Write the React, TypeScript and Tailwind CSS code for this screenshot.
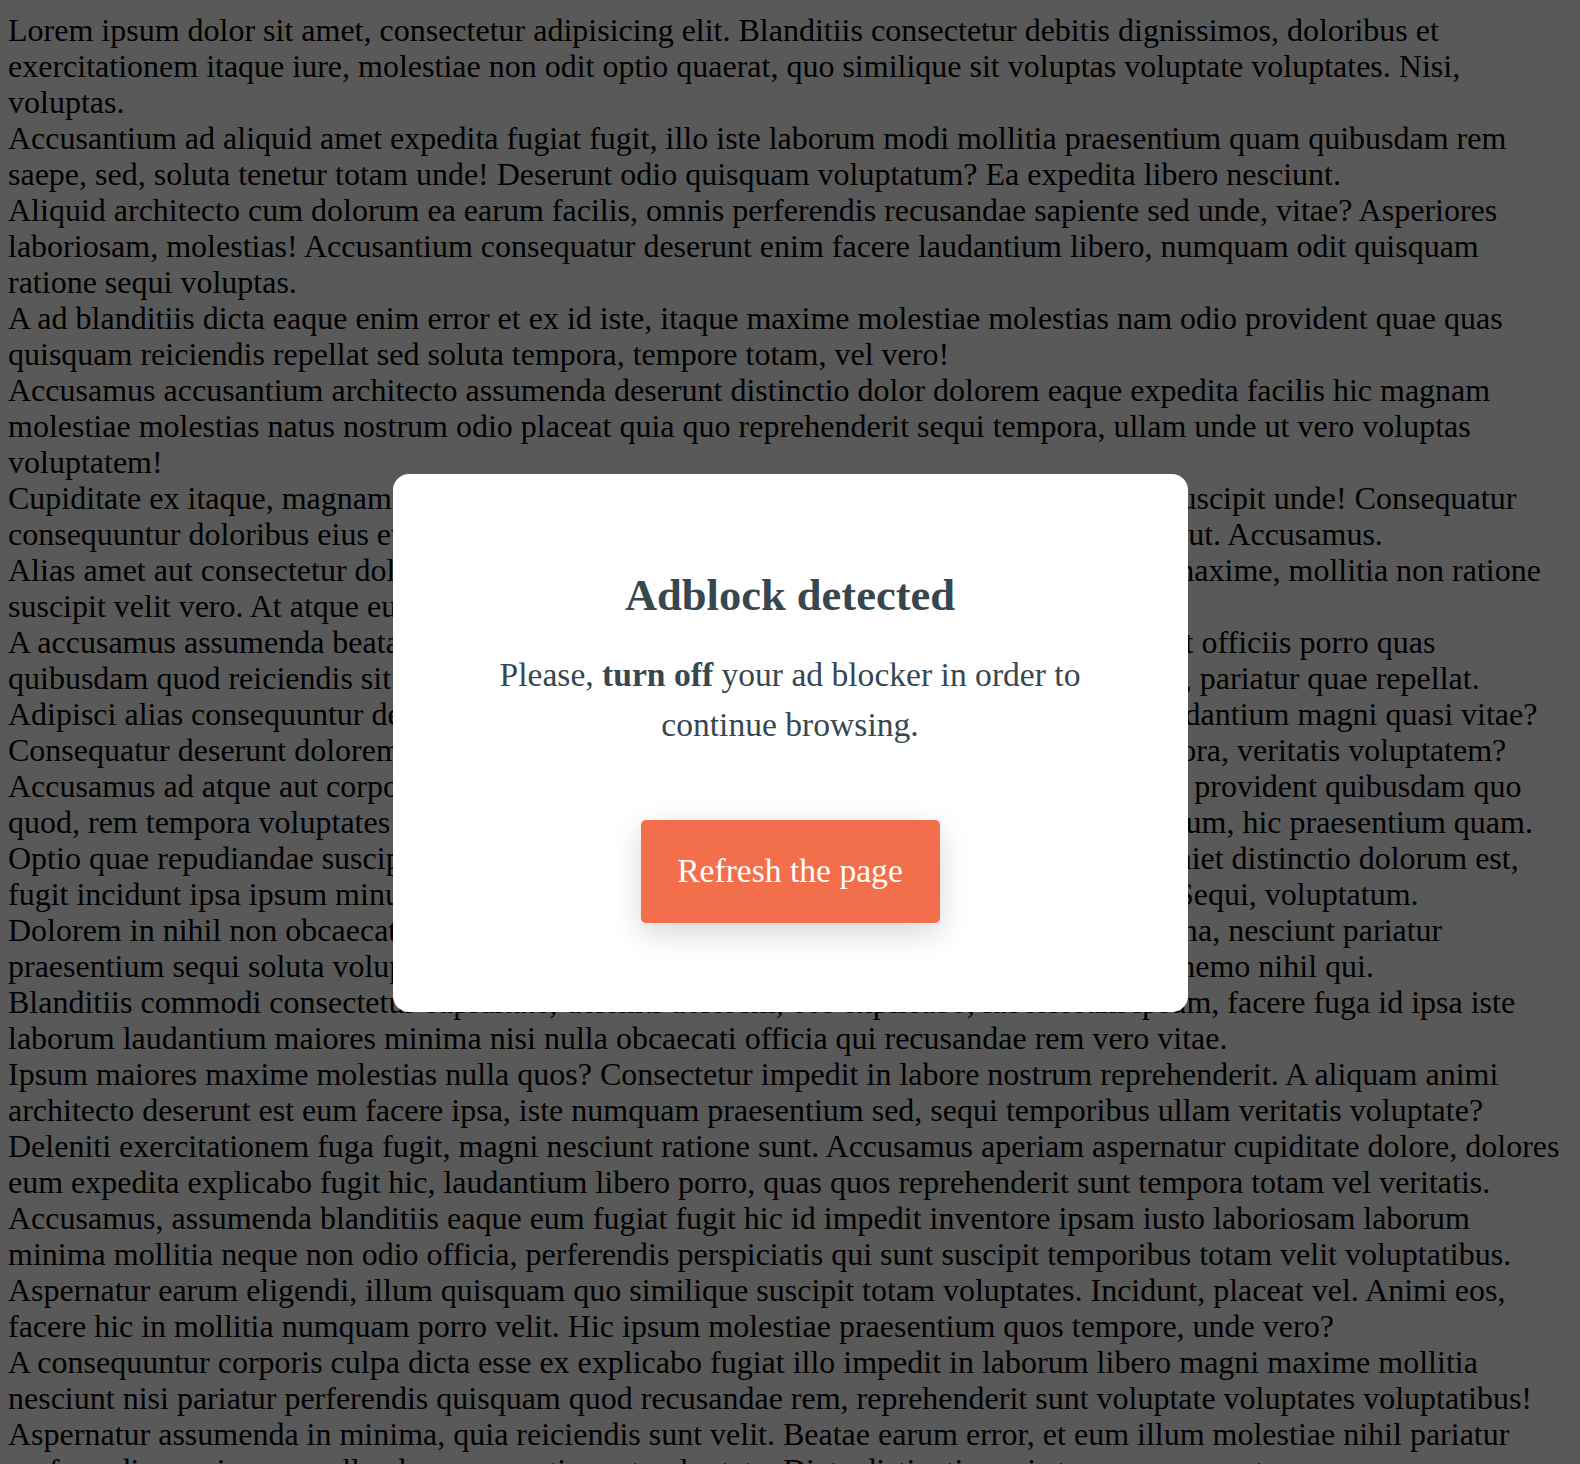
const PARAGRAPHS = [
  'Lorem ipsum dolor sit amet, consectetur adipisicing elit. Blanditiis consectetur debitis dignissimos, doloribus et exercitationem itaque iure, molestiae non odit optio quaerat, quo similique sit voluptas voluptate voluptates. Nisi, voluptas.',
  'Accusantium ad aliquid amet expedita fugiat fugit, illo iste laborum modi mollitia praesentium quam quibusdam rem saepe, sed, soluta tenetur totam unde! Deserunt odio quisquam voluptatum? Ea expedita libero nesciunt.',
  'Aliquid architecto cum dolorum ea earum facilis, omnis perferendis recusandae sapiente sed unde, vitae? Asperiores laboriosam, molestias! Accusantium consequatur deserunt enim facere laudantium libero, numquam odit quisquam ratione sequi voluptas.',
  'A ad blanditiis dicta eaque enim error et ex id iste, itaque maxime molestiae molestias nam odio provident quae quas quisquam reiciendis repellat sed soluta tempora, tempore totam, vel vero!',
  'Accusamus accusantium architecto assumenda deserunt distinctio dolor dolorem eaque expedita facilis hic magnam molestiae molestias natus nostrum odio placeat quia quo reprehenderit sequi tempora, ullam unde ut vero voluptas voluptatem!',
  'Cupiditate ex itaque, magnam nesciunt nostrum officia perspiciatis provident quaerat quia suscipit unde! Consequatur consequuntur doloribus eius eveniet explicabo fugiat illum impedit iure iusto optio tempora ut. Accusamus.',
  'Alias amet aut consectetur dolore doloremque ducimus eligendi enim eius eum harum iste maxime, mollitia non ratione suscipit velit vero. At atque eum minus nisi odio quis repellendus.',
  'A accusamus assumenda beatae commodi consequatur cupiditate delectus dolor earum et, sit officiis porro quas quibusdam quod reiciendis sit tempore totam unde et iste voluptate voluptatem voluptatibus, pariatur quae repellat.',
  'Adipisci alias consequuntur debitis delectus dicta dignissimos dolorem ea eos excepturi, laudantium magni quasi vitae? Consequatur deserunt dolorem doloribus ducimus eaque earum eius fugit, id laborum, tempora, veritatis voluptatem?',
  'Accusamus ad atque aut corporis cumque debitis dolore ducimus eligendi esse facilis labore provident quibusdam quo quod, rem tempora voluptates accusantium aliquam animi assumenda blanditiis dolorum rerum, hic praesentium quam.',
  'Optio quae repudiandae suscipit accusamus, adipisci, autem corporis dolores explicabo eveniet distinctio dolorum est, fugit incidunt ipsa ipsum minus modi molestias natus nemo nihil obcaecati possimus quas. Sequi, voluptatum.',
  'Dolorem in nihil non obcaecati a omnis perspiciatis quae quaerat quibusdam, maxime minima, nesciunt pariatur praesentium sequi soluta voluptatem. Ab adipisci aliquid asperiores cumque dolores earum nemo nihil qui.',
  'Blanditiis commodi consectetur cupiditate, deleniti dolorem, eos explicabo, laboriosam ipsum, facere fuga id ipsa iste laborum laudantium maiores minima nisi nulla obcaecati officia qui recusandae rem vero vitae.',
  'Ipsum maiores maxime molestias nulla quos? Consectetur impedit in labore nostrum reprehenderit. A aliquam animi architecto deserunt est eum facere ipsa, iste numquam praesentium sed, sequi temporibus ullam veritatis voluptate?',
  'Deleniti exercitationem fuga fugit, magni nesciunt ratione sunt. Accusamus aperiam aspernatur cupiditate dolore, dolores eum expedita explicabo fugit hic, laudantium libero porro, quas quos reprehenderit sunt tempora totam vel veritatis.',
  'Accusamus, assumenda blanditiis eaque eum fugiat fugit hic id impedit inventore ipsam iusto laboriosam laborum minima mollitia neque non odio officia, perferendis perspiciatis qui sunt suscipit temporibus totam velit voluptatibus.',
  'Aspernatur earum eligendi, illum quisquam quo similique suscipit totam voluptates. Incidunt, placeat vel. Animi eos, facere hic in mollitia numquam porro velit. Hic ipsum molestiae praesentium quos tempore, unde vero?',
  'A consequuntur corporis culpa dicta esse ex explicabo fugiat illo impedit in laborum libero magni maxime mollitia nesciunt nisi pariatur perferendis quisquam quod recusandae rem, reprehenderit sunt voluptate voluptates voluptatibus!',
  'Aspernatur assumenda in minima, quia reiciendis sunt velit. Beatae earum error, et eum illum molestiae nihil pariatur perferendis possimus repellendus, praesentium ut voluptate. Dicta distinctio, quis tempora quaerat numquam esse voluptatem tenetur.',
]

function AdblockModal() {
  return (
    <div className="fixed inset-0 flex items-center justify-center bg-[rgba(0,0,0,0.65)]">
      <div className="w-[795px] h-[538px] translate-y-[11px] rounded-2xl bg-white px-[80px] pt-[96px] text-center text-[#37474f]">
        <h2 className="text-[44.5px] leading-[50px] font-bold">Adblock detected</h2>
        <p className="mt-[30px] text-[33.6px] leading-[1.5]">
          Please, <strong className="font-bold">turn off</strong> your ad blocker in order to continue browsing.
        </p>
        <button
          type="button"
          onClick={() => window.location.reload()}
          className="mt-[69px] inline-flex h-[103px] w-[299px] items-center justify-center rounded-[5px] bg-[#f36e4a] text-[33.6px] text-white shadow-[0_10px_30px_rgba(0,0,0,0.16)]"
        >
          Refresh the page
        </button>
      </div>
    </div>
  )
}

export default function App() {
  return (
    <div className="h-screen overflow-hidden bg-white font-['Liberation_Serif','Times_New_Roman',serif] text-black">
      <div className="px-2 pt-3 text-[32px] leading-[36px]">
        {PARAGRAPHS.map((text, i) => (
          <p key={i}>{text}</p>
        ))}
      </div>
      <AdblockModal />
    </div>
  )
}
